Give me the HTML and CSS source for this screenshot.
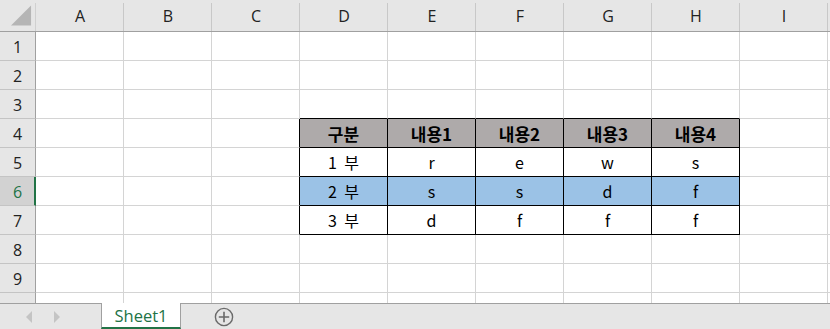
FILE: index.html
```html
<!DOCTYPE html>
<html lang="ko">
<head>
<meta charset="utf-8">
<title>Sheet1</title>
<link rel="stylesheet" href="styles.css">
</head>
<body>
<div class="sheet">
  <div class="grid">
    <div class="corner"><svg width="22" height="22" viewBox="0 0 22 22"><polygon points="0,21 21,21 21,0" fill="#b5b5b5"/></svg></div>
    <div class="ch">A</div><div class="ch">B</div><div class="ch">C</div><div class="ch">D</div><div class="ch">E</div><div class="ch">F</div><div class="ch">G</div><div class="ch">H</div><div class="ch">I</div><div class="ch"></div>

    <div class="rh">1</div><div class="c"></div><div class="c"></div><div class="c"></div><div class="c"></div><div class="c"></div><div class="c"></div><div class="c"></div><div class="c"></div><div class="c"></div><div class="c"></div>
    <div class="rh">2</div><div class="c"></div><div class="c"></div><div class="c"></div><div class="c"></div><div class="c"></div><div class="c"></div><div class="c"></div><div class="c"></div><div class="c"></div><div class="c"></div>
    <div class="rh">3</div><div class="c"></div><div class="c"></div><div class="c"></div><div class="c above"></div><div class="c above"></div><div class="c above"></div><div class="c above"></div><div class="c above"></div><div class="c"></div><div class="c"></div>

    <div class="rh">4</div><div class="c"></div><div class="c"></div><div class="c before"></div><div class="c t th">구분</div><div class="c t th">내용1</div><div class="c t th">내용2</div><div class="c t th">내용3</div><div class="c t th">내용4</div><div class="c"></div><div class="c"></div>
    <div class="rh">5</div><div class="c"></div><div class="c"></div><div class="c before"></div><div class="c t">1 부</div><div class="c t">r</div><div class="c t">e</div><div class="c t">w</div><div class="c t">s</div><div class="c"></div><div class="c"></div>
    <div class="rh sel">6</div><div class="c"></div><div class="c"></div><div class="c before"></div><div class="c t hl">2 부</div><div class="c t hl">s</div><div class="c t hl">s</div><div class="c t hl">d</div><div class="c t hl">f</div><div class="c"></div><div class="c"></div>
    <div class="rh">7</div><div class="c"></div><div class="c"></div><div class="c before"></div><div class="c t">3 부</div><div class="c t">d</div><div class="c t">f</div><div class="c t">f</div><div class="c t">f</div><div class="c"></div><div class="c"></div>

    <div class="rh">8</div><div class="c"></div><div class="c"></div><div class="c"></div><div class="c"></div><div class="c"></div><div class="c"></div><div class="c"></div><div class="c"></div><div class="c"></div><div class="c"></div>
    <div class="rh">9</div><div class="c"></div><div class="c"></div><div class="c"></div><div class="c"></div><div class="c"></div><div class="c"></div><div class="c"></div><div class="c"></div><div class="c"></div><div class="c"></div>
    <div class="rh last">10</div><div class="c"></div><div class="c"></div><div class="c"></div><div class="c"></div><div class="c"></div><div class="c"></div><div class="c"></div><div class="c"></div><div class="c"></div><div class="c"></div>
  </div>
  <div class="tabbar">
    <div class="nav">
      <svg width="8" height="12" viewBox="0 0 8 12"><polygon points="7,0 7,12 1,6" fill="#c4c4c4"/></svg>
      <svg width="8" height="12" viewBox="0 0 8 12"><polygon points="1,0 1,12 7,6" fill="#c4c4c4"/></svg>
    </div>
    <div class="tab">Sheet1</div>
    <div class="add">
      <svg width="20" height="20" viewBox="0 0 20 20"><circle cx="10" cy="10" r="8.6" fill="none" stroke="#6a6a6a" stroke-width="1.4"/><path d="M10 4.8V15.2M4.8 10H15.2" stroke="#6a6a6a" stroke-width="1.6"/></svg>
    </div>
  </div>
</div>
</body>
</html>
```

FILE: styles.css
```css
html, body {
  margin: 0;
  padding: 0;
  background: #ffffff;
}
.sheet {
  width: 830px;
  height: 329px;
  overflow: hidden;
  display: flex;
  flex-direction: column;
}
.grid {
  height: 303px;
  flex: none;
  overflow: hidden;
  display: grid;
  grid-template-columns: 36px repeat(10, 88px);
  grid-template-rows: 32px repeat(10, 29px);
  font-family: "Noto Sans CJK KR", "Noto Sans", sans-serif;
}
.grid > div {
  box-sizing: border-box;
  display: flex;
  align-items: center;
  justify-content: center;
  min-width: 0;
}
.corner {
  background: #e6e6e6 linear-gradient(#d0d0d0, #d0d0d0) no-repeat right bottom / 1px 28px;
  border-bottom: 1px solid #a0a0a0;
  padding: 4px 4px 3px 11px;
  justify-content: flex-start !important;
}
.corner svg {
  display: block;
}
.ch {
  background: #e6e6e6 linear-gradient(#c8c8c8, #c8c8c8) no-repeat right bottom / 1px 28px;
  border-bottom: 1px solid #a0a0a0;
  font-family: "Open Sans", "Noto Sans", sans-serif;
  font-size: 16px;
  color: #222222;
  padding-top: 1px;
}
.rh {
  background: #e6e6e6;
  border-right: 1px solid #a0a0a0;
  border-bottom: 1px solid #c4c4c4;
  font-family: "Open Sans", "Noto Sans", sans-serif;
  font-size: 16px;
  color: #222222;
  padding-top: 1px;
}
.rh.sel {
  background: #d2d2d2;
  border-right: 2px solid #217346;
  color: #217346;
  padding-left: 1px;
}
.rh.last {
  align-items: flex-start !important;
  padding-top: 5px;
}
.c {
  border-right: 1px solid #d4d4d4;
  border-bottom: 1px solid #d4d4d4;
  font-size: 16px;
  color: #000000;
  word-spacing: 3px;
}
.c.above {
  border-bottom-color: #000000;
}
.c.before {
  border-right-color: #000000;
}
.c.t {
  border-right-color: #000000;
  border-bottom-color: #000000;
}
.c.th {
  background: #aeaaaa;
  font-weight: bold;
  font-size: 17px;
}
.c.hl {
  background: #9bc2e6;
}
.tabbar {
  flex: 1;
  background: #e6e6e6;
  border-top: 1px solid #a0a0a0;
  display: flex;
  align-items: stretch;
}
.nav {
  width: 101px;
  display: flex;
  align-items: center;
  gap: 20px;
  padding-left: 25px;
  box-sizing: border-box;
}
.nav svg {
  display: block;
}
.tab {
  width: 80px;
  box-sizing: border-box;
  margin-top: -1px;
  background: #ffffff;
  border-left: 1px solid #a0a0a0;
  border-right: 1px solid #a0a0a0;
  border-bottom: 2px solid #217346;
  color: #217346;
  font-family: "Open Sans", "Noto Sans", sans-serif;
  font-size: 16.5px;
  display: flex;
  align-items: center;
  justify-content: center;
  padding-top: 1px;
}
.add {
  display: flex;
  align-items: center;
  padding-left: 33px;
  padding-top: 1px;
}
.add svg {
  display: block;
}
```
